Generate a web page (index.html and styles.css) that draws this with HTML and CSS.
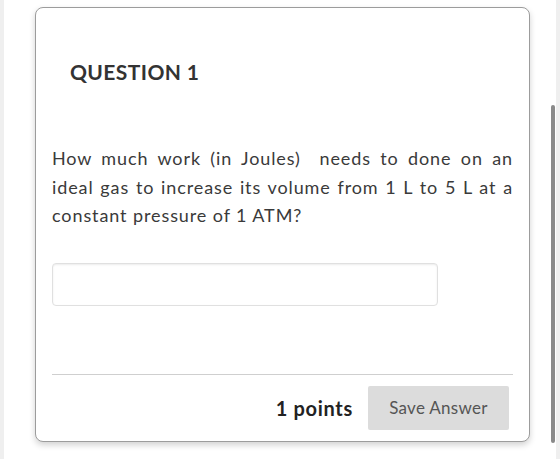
FILE: index.html
```
<!DOCTYPE html>
<html>
<head>
<meta charset="utf-8">
<link rel="stylesheet" href="styles.css">
</head>
<body>
<div class="page">
  <div class="strip"></div>
  <main class="main">
    <section class="card">
      <h2 class="title">QUESTION 1</h2>
      <p class="question">
        <span class="line">How much work (in Joules)&nbsp; needs to done on an</span>
        <span class="line">ideal gas to increase its volume from 1 L to 5 L at a</span>
        <span class="line last">constant pressure of 1 ATM?</span>
      </p>
      <input class="answer" type="text">
      <div class="divider"></div>
      <div class="footer">
        <span class="points">1 points</span>
        <button class="save">Save Answer</button>
      </div>
    </section>
  </main>
  <div class="strip"></div>
  <div class="scrollbar"></div>
</div>
</body>
</html>
```

FILE: styles.css
```
html, body {
  margin: 0;
  padding: 0;
  background: #fff;
}
body {
  font-family: "Lato", "Open Sans", sans-serif;
  width: 560px;
  height: 459px;
  overflow: hidden;
}
.page {
  display: grid;
  grid-template-columns: 4px 1fr 4px;
  height: 459px;
  position: relative;
}
.strip {
  background: #efefef;
}
.main {
  padding: 7px 0 0 31px;
}
.card {
  box-sizing: border-box;
  width: 495px;
  border: 1px solid #9c9c9c;
  border-radius: 8px;
  box-shadow: 0 3px 6px rgba(0, 0, 0, 0.18);
  padding: 0 16px 11px;
  background: #fff;
}
.title {
  margin: 51px 0 0 18px;
  font-size: 21px;
  line-height: 25px;
  font-weight: 700;
  letter-spacing: 0.4px;
  color: #333;
}
.question {
  margin: 60px 0 0;
  font-size: 18px;
  line-height: 28.5px;
  letter-spacing: 0.9px;
  color: #3a3a3a;
}
.line {
  display: block;
  text-align: justify;
  text-align-last: justify;
}
.line.last {
  text-align-last: left;
}
.answer {
  display: block;
  box-sizing: border-box;
  margin: 33px 0 0;
  width: 386px;
  height: 43px;
  border: 1px solid #e0e0e0;
  border-radius: 4px;
  box-shadow: inset 0 1px 2px rgba(0, 0, 0, 0.08);
  background: #fff;
  outline: none;
}
.divider {
  margin-top: 68px;
  height: 1px;
  background: #cfcfcf;
}
.footer {
  display: flex;
  justify-content: flex-end;
  align-items: center;
  gap: 15px;
  margin-top: 11px;
  padding-right: 4px;
}
.points {
  font-size: 20px;
  font-weight: 700;
  letter-spacing: 0.7px;
  color: #222;
}
.save {
  width: 141px;
  height: 44px;
  border: none;
  border-radius: 2px;
  background: #dcdcdc;
  color: #555;
  font-family: "Lato", "Open Sans", sans-serif;
  font-size: 17px;
  letter-spacing: 0.3px;
  padding: 0;
}
.scrollbar {
  position: absolute;
  left: 551px;
  top: 105px;
  width: 4px;
  height: 338px;
  border-radius: 2px;
  background: #8a8a8a;
}
```
